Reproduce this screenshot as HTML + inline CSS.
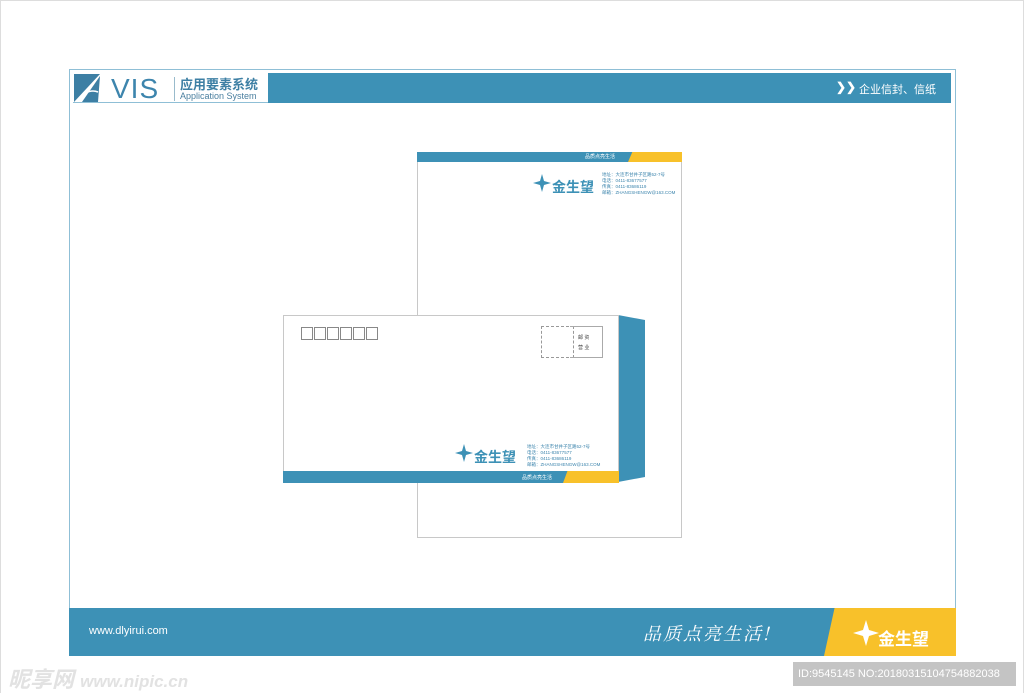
<!DOCTYPE html>
<html><head><meta charset="utf-8">
<style>
*{margin:0;padding:0;box-sizing:border-box}
body{width:1024px;height:693px;background:#fff;position:relative;overflow:hidden;font-family:"Liberation Sans","Noto Sans CJK SC",sans-serif}
.a{position:absolute}
.blue{background:#3d91b6}
.yel{background:#f8c12a}
</style></head><body>
<div class="a" style="left:0;top:0;width:1024px;height:693px;border:1px solid #ddd;border-bottom:none"></div>
<div class="a" style="left:69px;top:69px;width:887px;height:587px;border:1px solid #8fbfd6"></div>
<div class="a" style="left:73px;top:73px;width:878px;height:30px;border-bottom:1px solid #8fbfd6"></div>
<svg class="a" style="left:74px;top:74px" width="30" height="28" viewBox="0 0 30 28">
<polygon points="0,0 26,0 0,28" fill="#3d7fa4"/><polygon points="8,28 26,2 24,28" fill="#3d7fa4"/><path d="M4,26 Q14,14 24,18" stroke="#fff" stroke-width="1.5" fill="none"/></svg>
<div class="a" style="left:111px;top:73px;font-size:28px;color:#3d85ad;letter-spacing:1px">VIS</div>
<div class="a" style="left:174px;top:77px;width:1px;height:24px;background:#9bc"></div>
<div class="a" style="left:180px;top:74px;font-size:13px;color:#3d7fa4;font-weight:bold">应用要素系统</div>
<div class="a" style="left:180px;top:91px;font-size:9px;color:#4a7f9f">Application System</div>
<div class="a blue" style="left:268px;top:73px;width:683px;height:30px"></div>
<div class="a" style="left:836px;top:80px;font-size:12px;color:#fff;font-weight:bold">&#10095;&#10095;</div>
<div class="a" style="left:859px;top:81px;font-size:11px;color:#fff">企业信封、信纸</div>
<div class="a" style="left:417px;top:152px;width:265px;height:386px;border:1px solid #c8c8c8;background:#fff"></div>
<div class="a blue" style="left:417px;top:152px;width:265px;height:10px"></div>
<div class="a yel" style="left:628px;top:152px;width:54px;height:10px;clip-path:polygon(8% 0,100% 0,100% 100%,0 100%)"></div>
<div class="a" style="left:585px;top:153px;font-size:5px;color:#fff">品质点亮生活</div>
<svg class="a" style="left:532px;top:170px" width="70" height="26"><path d="M10,4 L12,11 L19,13 L12,15 L10,22 L8,15 L1,13 L8,11Z" fill="#3d91b6"/><text x="20" y="22" font-size="14" font-weight="bold" fill="#3d91b6" font-family="Noto Sans CJK SC">金生望</text></svg>
<div class="a" style="left:602px;top:172px;font-size:4.5px;line-height:6px;color:#3d85ad">地址：大连市甘井子区路52-7号<br>电话：0411-83677577<br>传真：0411-83686119<br>邮箱：ZHANGSHENGW@163.COM</div>
<svg class="a" style="left:617px;top:314px" width="30" height="170"><polygon points="1,1 28,6 28,163 1,168" fill="#3d91b6"/></svg>
<div class="a" style="left:283px;top:315px;width:336px;height:168px;border:1px solid #c8c8c8;background:#fff"></div>
<div class="a blue" style="left:283px;top:471px;width:336px;height:12px"></div>
<div class="a yel" style="left:563px;top:471px;width:56px;height:12px;clip-path:polygon(8% 0,100% 0,100% 100%,0 100%)"></div>
<div class="a" style="left:522px;top:474px;font-size:5px;color:#fff">品质点亮生活</div>
<div class="a" style="left:301px;top:327px;display:flex;gap:1px">
<div style="width:12px;height:13px;border:1px solid #888"></div><div style="width:12px;height:13px;border:1px solid #888"></div><div style="width:12px;height:13px;border:1px solid #888"></div><div style="width:12px;height:13px;border:1px solid #888"></div><div style="width:12px;height:13px;border:1px solid #888"></div><div style="width:12px;height:13px;border:1px solid #888"></div></div>
<div class="a" style="left:541px;top:326px;width:33px;height:32px;border:1px dashed #999"></div>
<div class="a" style="left:570px;top:326px;width:33px;height:32px;border:1px solid #aaa;border-left:none;font-size:5px;line-height:10px;padding:6px 0 0 8px;color:#444">邮 资<br>营 业</div>
<svg class="a" style="left:454px;top:440px" width="70" height="26"><path d="M10,4 L12,11 L19,13 L12,15 L10,22 L8,15 L1,13 L8,11Z" fill="#3d91b6"/><text x="20" y="22" font-size="14" font-weight="bold" fill="#3d91b6" font-family="Noto Sans CJK SC">金生望</text></svg>
<div class="a" style="left:527px;top:444px;font-size:4.5px;line-height:6px;color:#3d85ad">地址：大连市甘井子区路52-7号<br>电话：0411-83677577<br>传真：0411-83686119<br>邮箱：ZHANGSHENGW@163.COM</div>
<div class="a blue" style="left:69px;top:608px;width:887px;height:48px"></div>
<div class="a yel" style="left:824px;top:608px;width:132px;height:48px;clip-path:polygon(8% 0,100% 0,100% 100%,0 100%)"></div>
<div class="a" style="left:89px;top:625px;font-size:11px;color:#fff">www.dlyirui.com</div>
<div class="a" style="left:643px;top:620px;font-size:18px;color:#fff;font-style:italic;font-family:'Noto Serif CJK SC',serif;letter-spacing:2px">品质点亮生活!</div>
<svg class="a" style="left:852px;top:614px" width="90" height="36"><path d="M14,6 L17,16 L27,19 L17,22 L14,32 L11,22 L1,19 L11,16Z" fill="#fff"/><text x="26" y="31" font-size="17" font-weight="bold" fill="#fff" font-family="Noto Sans CJK SC">金生望</text></svg>
<div class="a" style="left:8px;top:662px;font-size:22px;color:#e2e2e2;font-weight:bold;font-style:italic">昵享网 <span style="font-size:17px">www.nipic.cn</span></div>
<div class="a" style="left:793px;top:662px;width:223px;height:24px;background:#c4c4c4;color:#fff;font-size:11px;line-height:24px;padding-left:5px">ID:9545145 NO:20180315104754882038</div>
</body></html>
